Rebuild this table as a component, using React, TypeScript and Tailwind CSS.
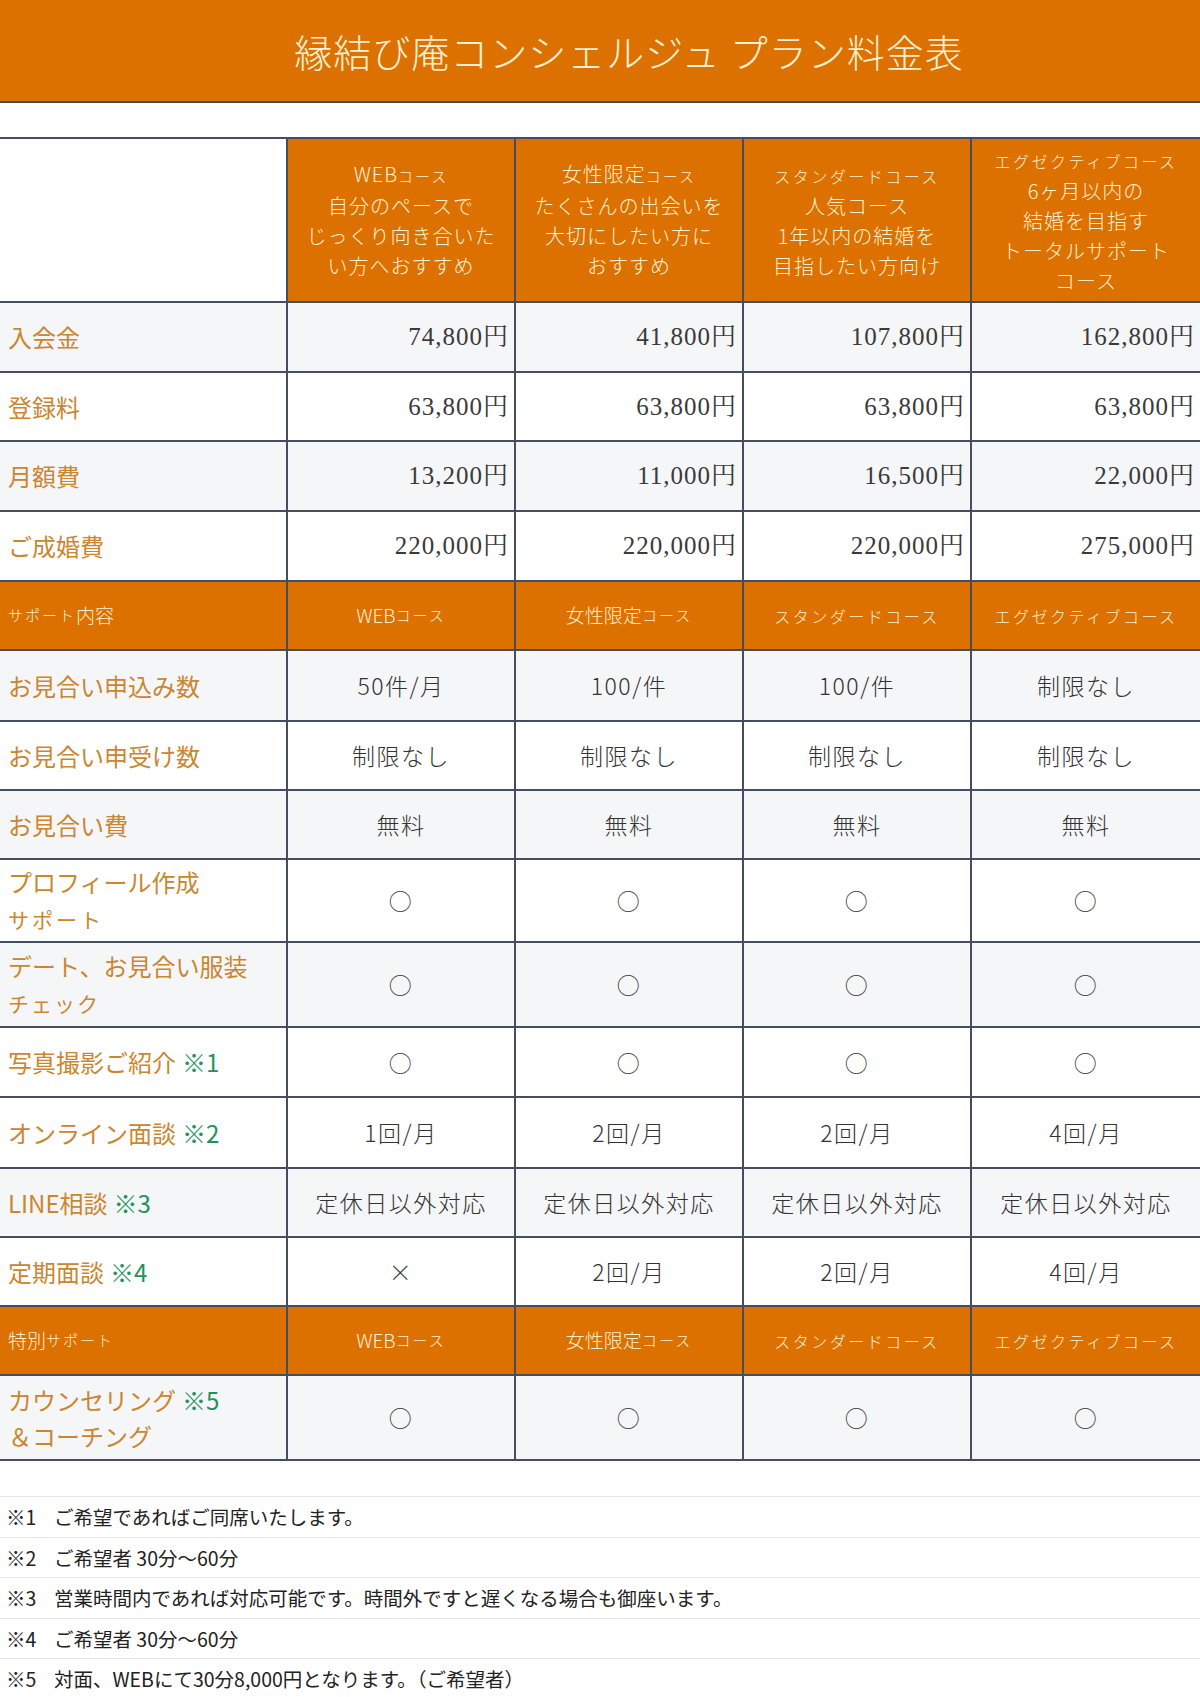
import React from "react";

const SANS = "font-['Noto_Sans_CJK_JP','Noto_Sans',sans-serif]";

type Row = {
  label: React.ReactNode;
  cells: string[];
  h: string;
  gray: boolean;
  price?: boolean;
};

const Note = ({ n }: { n: string }) => (
  <span className="ml-[6px] text-[#23925b]">※{n}</span>
);

// small kana like the original spreadsheet renders
const Sm = ({ children }: { children: React.ReactNode }) => (
  <span className="text-[15px] tracking-[2px]">{children}</span>
);

const priceRows: Row[] = [
  { label: "入会金", cells: ["74,800円", "41,800円", "107,800円", "162,800円"], h: "h-[70px]", gray: true, price: true },
  { label: "登録料", cells: ["63,800円", "63,800円", "63,800円", "63,800円"], h: "h-[69px]", gray: false, price: true },
  { label: "月額費", cells: ["13,200円", "11,000円", "16,500円", "22,000円"], h: "h-[70px]", gray: true, price: true },
  { label: "ご成婚費", cells: ["220,000円", "220,000円", "220,000円", "275,000円"], h: "h-[70px]", gray: false, price: true },
];

const supportRows: Row[] = [
  { label: "お見合い申込み数", cells: ["50件/月", "100/件", "100/件", "制限なし"], h: "h-[71px]", gray: true },
  { label: "お見合い申受け数", cells: ["制限なし", "制限なし", "制限なし", "制限なし"], h: "h-[69px]", gray: false },
  { label: "お見合い費", cells: ["無料", "無料", "無料", "無料"], h: "h-[69px]", gray: true },
  {
    label: (
      <>
        プロフィール作成
        <br />
        <span className="text-[21px] tracking-[3px]">サポート</span>
      </>
    ),
    cells: ["○", "○", "○", "○"],
    h: "h-[83px]",
    gray: false,
  },
  {
    label: (
      <>
        デート、お見合い服装
        <br />
        <span className="text-[21px] tracking-[2px]">チェック</span>
      </>
    ),
    cells: ["○", "○", "○", "○"],
    h: "h-[85px]",
    gray: true,
  },
  { label: <>写真撮影ご紹介<Note n="1" /></>, cells: ["○", "○", "○", "○"], h: "h-[70px]", gray: false },
  { label: <>オンライン面談<Note n="2" /></>, cells: ["1回/月", "2回/月", "2回/月", "4回/月"], h: "h-[71px]", gray: false },
  { label: <>LINE相談<Note n="3" /></>, cells: ["定休日以外対応", "定休日以外対応", "定休日以外対応", "定休日以外対応"], h: "h-[69px]", gray: true },
  { label: <>定期面談<Note n="4" /></>, cells: ["×", "2回/月", "2回/月", "4回/月"], h: "h-[69px]", gray: false },
];

const specialRows: Row[] = [
  {
    label: (
      <>
        カウンセリング<Note n="5" />
        <br />
        ＆コーチング
      </>
    ),
    cells: ["○", "○", "○", "○"],
    h: "h-[85px]",
    gray: true,
  },
];

const notes = [
  ["※1", "ご希望であればご同席いたします。"],
  ["※2", "ご希望者 30分〜60分"],
  ["※3", "営業時間内であれば対応可能です。時間外ですと遅くなる場合も御座います。"],
  ["※4", "ご希望者 30分〜60分"],
  ["※5", "対面、WEBにて30分8,000円となります。（ご希望者）"],
];

function CourseNames() {
  return [
    <>WEB<Sm>コース</Sm></>,
    <>女性限定<Sm>コース</Sm></>,
    <span className="text-[16px] tracking-[2.5px]">スタンダードコース</span>,
    <span className="text-[16px] tracking-[2.5px]">エグゼクティブコース</span>,
  ];
}

function SectionRow({ title }: { title: React.ReactNode }) {
  const names = CourseNames();
  return (
    <div className="grid h-[69px] grid-cols-[288px_repeat(4,minmax(0,1fr))] border-b-2 border-[#454e5e] bg-[#dc7100] text-[19px] font-light text-[#fdf0d2]">
      <div className="flex items-center border-r-2 border-[#454e5e] pl-[8px]">{title}</div>
      {names.map((n, i) => (
        <div key={i} className={`flex items-center justify-center ${i < 3 ? "border-r-2 border-[#454e5e]" : ""}`}>
          {n}
        </div>
      ))}
    </div>
  );
}

function DataRow({ row }: { row: Row }) {
  return (
    <div
      className={`grid ${row.h} grid-cols-[288px_repeat(4,minmax(0,1fr))] border-b-2 border-[#454e5e] ${row.gray ? "bg-[#f5f6f8]" : "bg-white"}`}
    >
      <div className="flex items-center border-r-2 border-[#454e5e] pl-[8px] text-[24px] font-normal leading-[36px] text-[#cb8630]">
        <div>{row.label}</div>
      </div>
      {row.cells.map((c, i) => (
        <div
          key={i}
          className={`flex items-center ${i < 3 ? "border-r-2 border-[#454e5e]" : ""} ${
            row.price
              ? "justify-end pr-[5px] font-['Liberation_Serif','Noto_Serif_CJK_JP','Noto_Sans_CJK_JP',serif] text-[25px] tracking-[1px] text-[#3a3a3a]"
              : "justify-center text-[23px] font-light tracking-[1.5px] text-[#333]"
          }`}
        >
          {c}
        </div>
      ))}
    </div>
  );
}

export default function App() {
  const heads = [
    <>
      WEB<Sm>コース</Sm>
      <br />
      自分のペースで
      <br />
      じっくり向き合いた
      <br />
      い方へおすすめ
    </>,
    <>
      女性限定<Sm>コース</Sm>
      <br />
      たくさんの出会いを
      <br />
      大切にしたい方に
      <br />
      おすすめ
    </>,
    <>
      <span className="text-[16px] tracking-[2.5px]">スタンダードコース</span>
      <br />
      人気コース
      <br />
      1年以内の結婚を
      <br />
      目指したい方向け
    </>,
    <>
      <span className="text-[16px] tracking-[2.5px]">エグゼクティブコース</span>
      <br />
      6ヶ月以内の
      <br />
      結婚を目指す
      <br />
      トータルサポート
      <br />
      コース
    </>,
  ];

  return (
    <div className={`w-[1200px] bg-white ${SANS}`}>
      {/* Title */}
      <div className="flex h-[103px] items-center justify-center border-b-2 border-[#4a4a4a] bg-[#dc7100] pl-[58px]">
        <h1 className="text-[38px] font-light tracking-[1px] text-[#fdf0d2]">縁結び庵コンシェルジュ プラン料金表</h1>
      </div>

      <div className="h-[34px]" />

      {/* Course header */}
      <div className="grid h-[166px] grid-cols-[288px_repeat(4,minmax(0,1fr))] border-y-2 border-[#454e5e]">
        <div className="border-r-2 border-[#454e5e] bg-white" />
        {heads.map((h, i) => (
          <div
            key={i}
            className={`flex items-center justify-center bg-[#dc7100] text-center text-[20px] font-light leading-[30px] tracking-[1px] text-[#fdf0d2] ${
              i < 3 ? "border-r-2 border-[#454e5e]" : ""
            }`}
          >
            <div>{h}</div>
          </div>
        ))}
      </div>

      {priceRows.map((r, i) => (
        <DataRow key={i} row={r} />
      ))}

      <SectionRow title={<><Sm>サポート</Sm>内容</>} />

      {supportRows.map((r, i) => (
        <DataRow key={i} row={r} />
      ))}

      <SectionRow title={<>特別<Sm>サポート</Sm></>} />

      {specialRows.map((r, i) => (
        <DataRow key={i} row={r} />
      ))}

      {/* Footnotes */}
      <div className="h-[35px]" />
      <div className="text-[19.5px] text-[#222]">
        {notes.map(([k, t], i) => (
          <div key={i} className="flex h-[40.5px] items-center border-t border-[#e4e6ea] pl-[6px]">
            <span className="w-[48px]">{k}</span>
            <span>{t}</span>
          </div>
        ))}
      </div>
    </div>
  );
}
